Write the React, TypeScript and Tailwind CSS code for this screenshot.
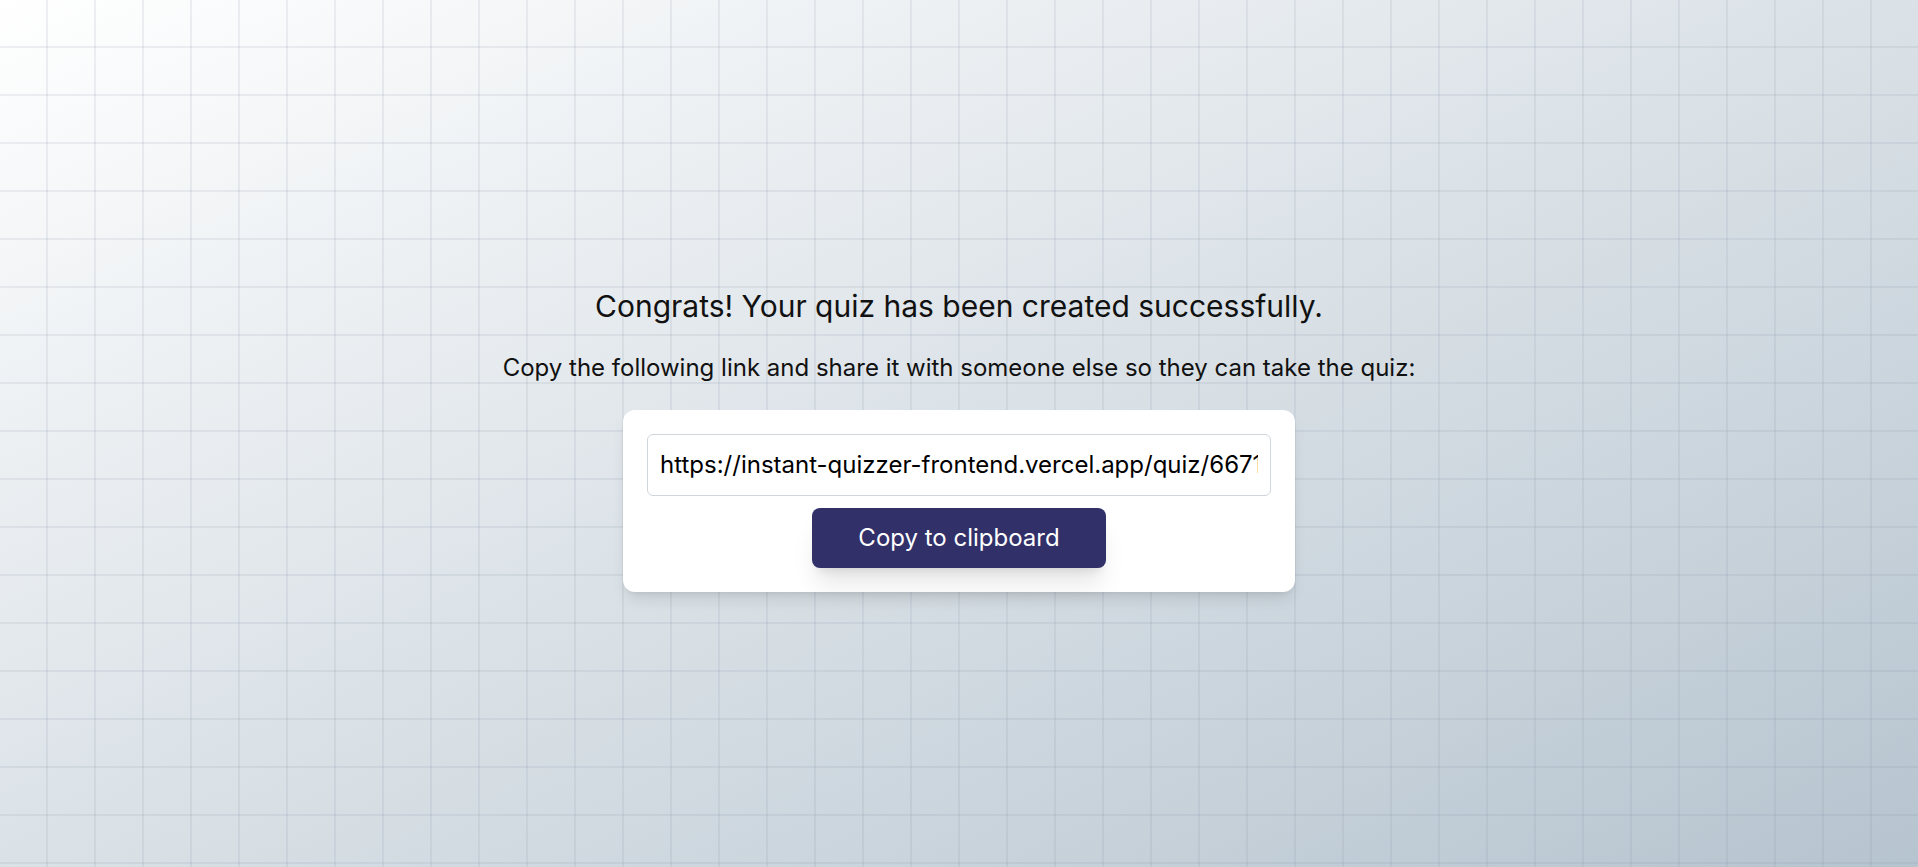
import React from "react";

export default function App() {
  const url =
    "https://instant-quizzer-frontend.vercel.app/quiz/6671a3f2c9e8b4d5e6f7a8b9";
  return (
    <div
      className="relative min-h-screen w-full overflow-hidden bg-[linear-gradient(to_bottom_right,#ffffff,#b6c4cf)] font-['Inter',sans-serif] text-[#111111]"
    >
      <div className="pointer-events-none absolute inset-0 bg-[linear-gradient(to_right,transparent_46px,rgba(125,138,160,0.13)_46px,rgba(125,138,160,0.13)_48px),linear-gradient(to_bottom,transparent_46px,rgba(125,138,160,0.13)_46px,rgba(125,138,160,0.13)_48px)] bg-[length:48px_48px]" />
      <div className="relative flex min-h-screen flex-col items-center justify-center pt-[13px]">
        <h1 className="mb-7 text-3xl font-normal leading-9">
          Congrats! Your quiz has been created successfully.
        </h1>
        <p className="mb-[26px] text-2xl leading-8">
          Copy the following link and share it with someone else so they can take the quiz:
        </p>
        <div className="flex w-full max-w-2xl flex-col items-center gap-3 rounded-xl bg-white p-6 shadow-lg">
          <input
            readOnly
            value={url}
            className="w-full rounded-md border border-gray-300 bg-white px-3 py-3.5 text-2xl leading-8 text-black outline-none"
          />
          <button className="rounded-lg bg-[#313068] px-[46px] py-3.5 text-2xl leading-8 text-white shadow-xl">
            Copy to clipboard
          </button>
        </div>
      </div>
    </div>
  );
}
